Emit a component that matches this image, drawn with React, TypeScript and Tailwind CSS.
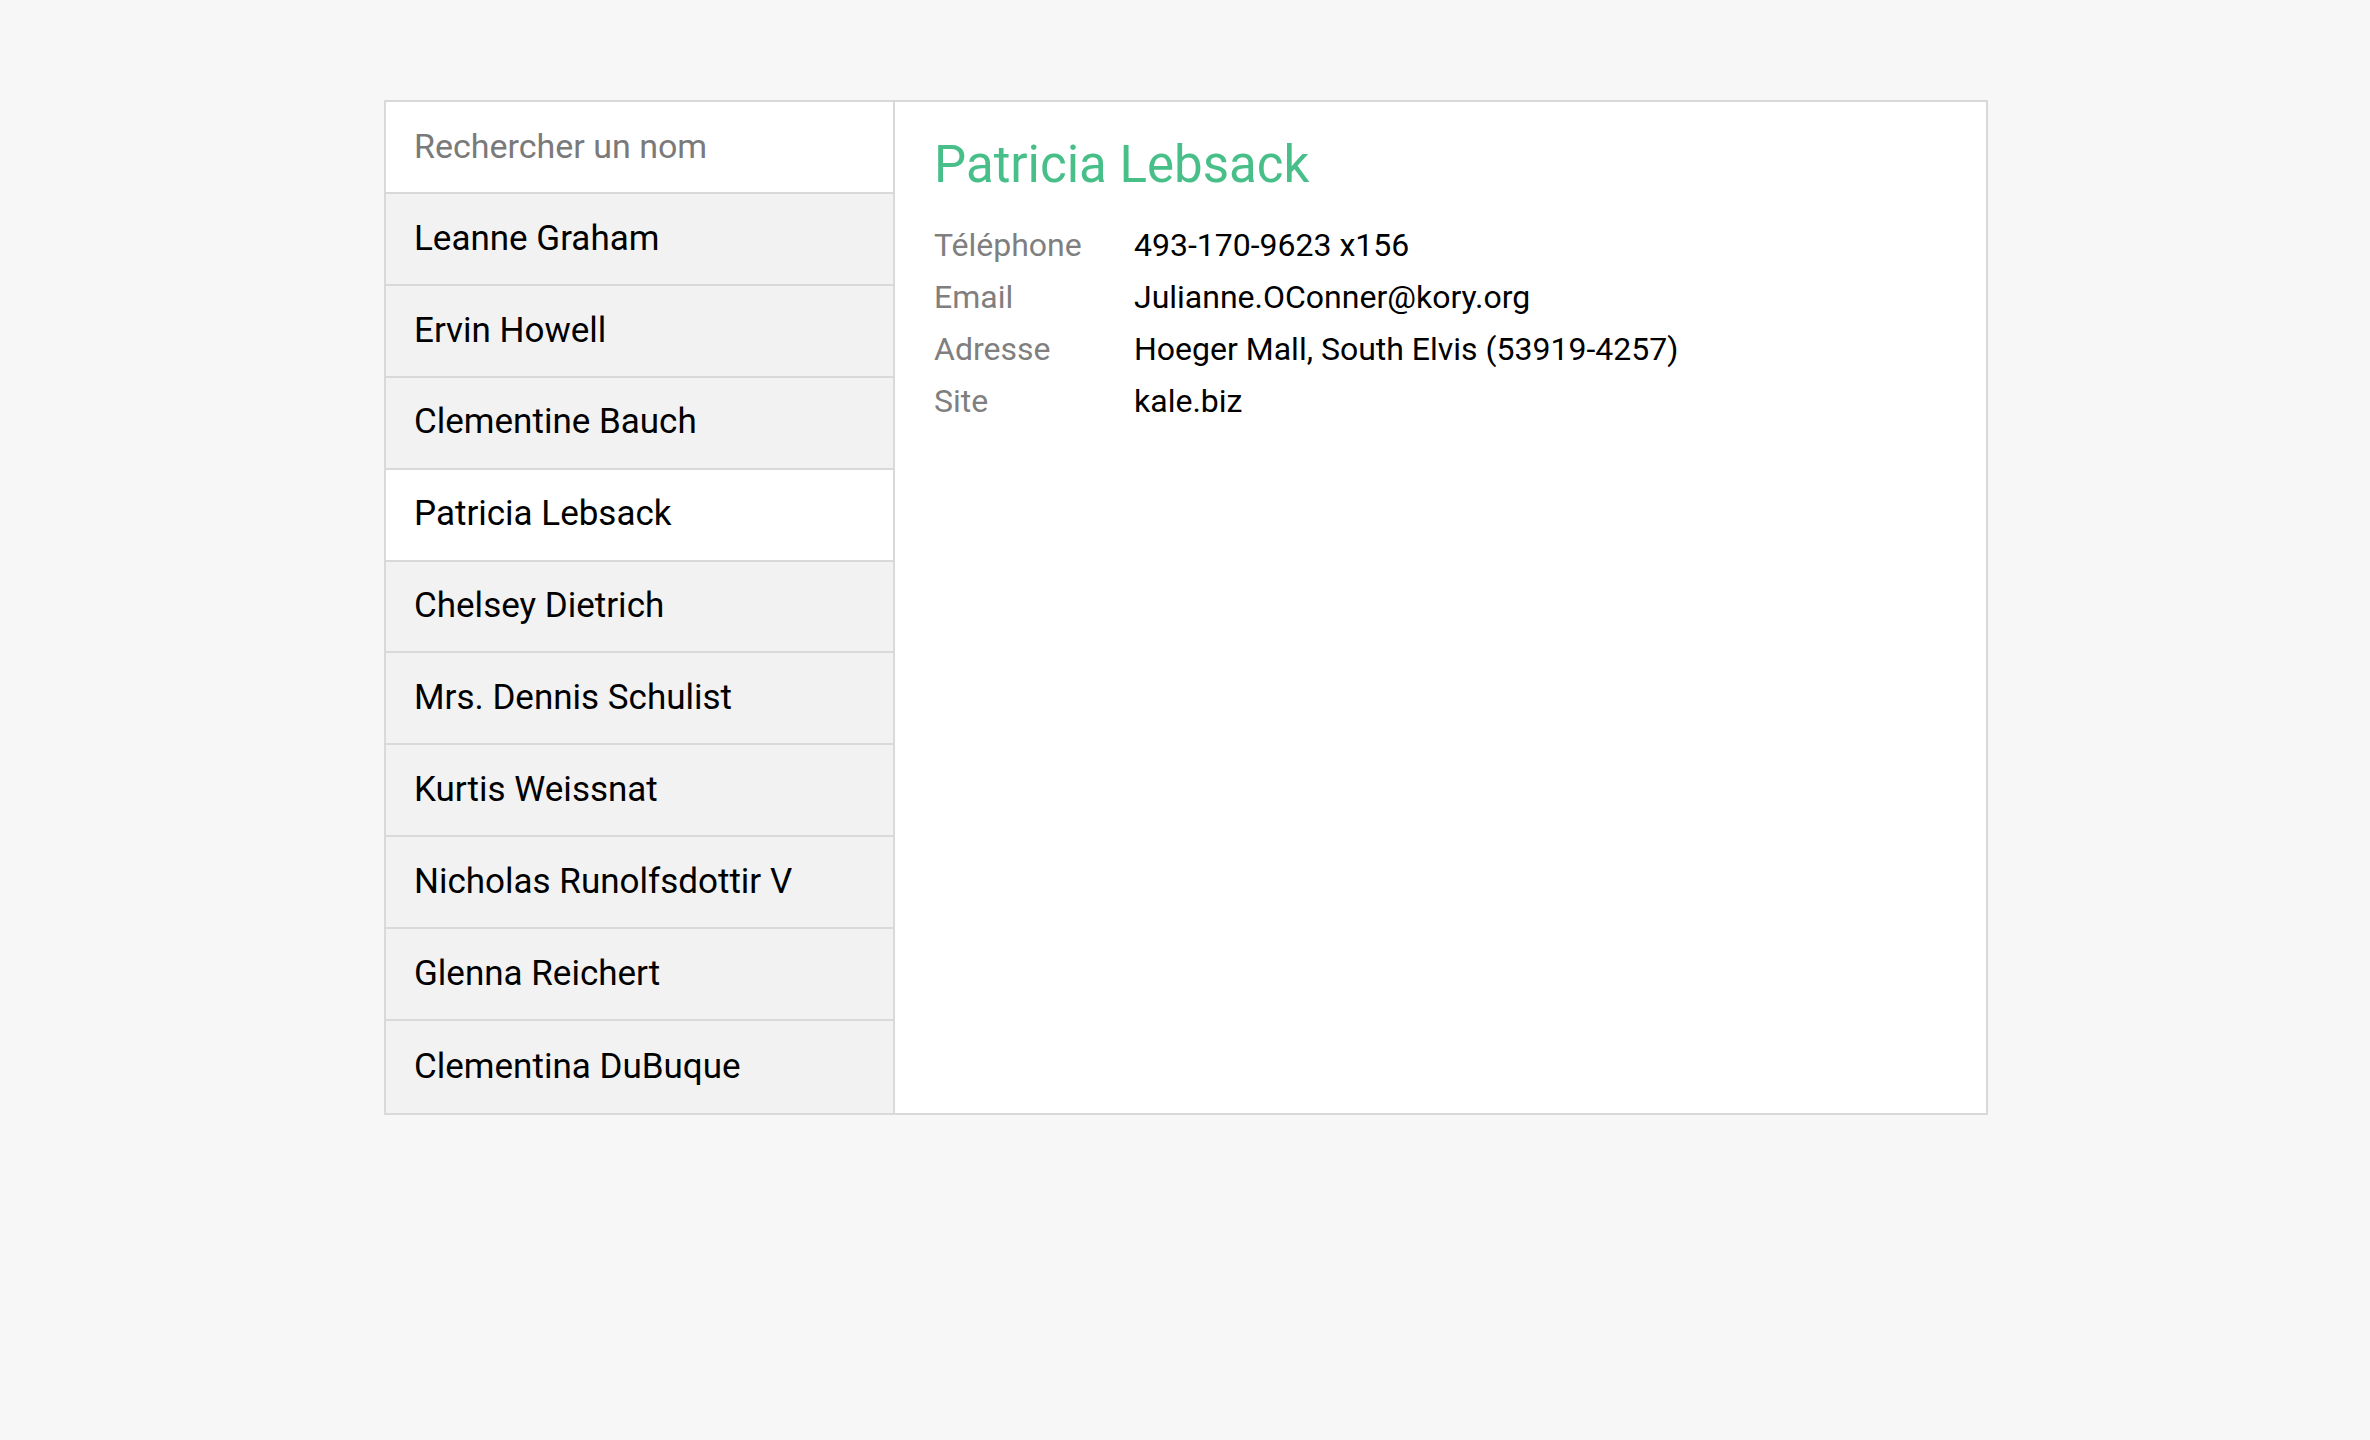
import React from "react";

const names = [
  "Leanne Graham",
  "Ervin Howell",
  "Clementine Bauch",
  "Patricia Lebsack",
  "Chelsey Dietrich",
  "Mrs. Dennis Schulist",
  "Kurtis Weissnat",
  "Nicholas Runolfsdottir V",
  "Glenna Reichert",
  "Clementina DuBuque",
];

const details: [string, string][] = [
  ["Téléphone", "493-170-9623 x156"],
  ["Email", "Julianne.OConner@kory.org"],
  ["Adresse", "Hoeger Mall, South Elvis (53919-4257)"],
  ["Site", "kale.biz"],
];

export default function App() {
  return (
    <div
      className="min-h-[1440px] w-full bg-[#f7f7f7] pt-[100px] pl-[384px]"
      style={{ fontFamily: "Roboto, 'Liberation Sans', sans-serif" }}
    >
      <div className="flex w-[1604px] h-[1015px] border-2 border-[#d9d9d9] bg-white">
        <div className="flex w-[509px] flex-col border-r-2 border-[#d9d9d9]">
          <div className="flex h-[92px] items-center border-b-2 border-[#d9d9d9] bg-white pl-[28px]">
            <input
              className="w-full bg-transparent text-[34px] text-black outline-none placeholder:text-[#7a7a7a]"
              placeholder="Rechercher un nom"
            />
          </div>
          {names.map((n, i) => (
            <div
              key={n}
              className={
                "flex h-[92px] items-center pl-[28px] text-[35px] text-black " +
                (i < names.length - 1 ? "border-b-2 border-[#d9d9d9] " : "") +
                (n === "Patricia Lebsack" ? "bg-white" : "bg-[#f2f2f2]")
              }
            >
              {n}
            </div>
          ))}
        </div>
        <div className="flex-1 pl-[39px] pt-[27px]">
          <h1 className="text-[51px] leading-[72px] text-[#48bf89]">Patricia Lebsack</h1>
          <div className="mt-[18px] text-[32px] leading-[52px]">
            {details.map(([k, v]) => (
              <div key={k} className="flex">
                <div className="w-[200px] text-[#7f7f7f]">{k}</div>
                <div className="text-black">{v}</div>
              </div>
            ))}
          </div>
        </div>
      </div>
    </div>
  );
}
